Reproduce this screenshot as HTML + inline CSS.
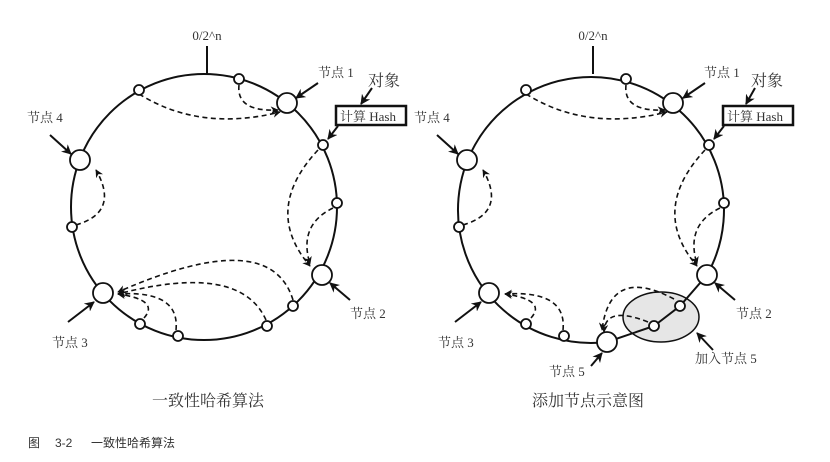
<!DOCTYPE html>
<html><head><meta charset="utf-8"><style>
html,body{margin:0;padding:0;background:#fff;width:830px;height:462px;overflow:hidden}
svg{display:block}
.t{font-family:"Liberation Serif","Noto Serif CJK SC",serif;fill:#333}
</style></head><body>
<svg width="830" height="462" viewBox="0 0 830 462" xmlns="http://www.w3.org/2000/svg">
<defs>
<marker id="ah" viewBox="0 0 10 10" refX="9" refY="5" markerWidth="5" markerHeight="5" orient="auto"><path d="M0,0 L10,5 L0,10 L3,5 z" fill="#111"/></marker>
</defs>
<g stroke="#111" fill="none">
<circle cx="204" cy="207" r="133" stroke-width="2"/>
<line x1="207" y1="46" x2="207" y2="74" stroke-width="2"/>
<g stroke-dasharray="5,3.5" stroke-width="1.6" marker-end="url(#ah)">
<path d="M139,94 Q200,132 280,112"/>
<path d="M239,85 Q236,112 278,110"/>
<path d="M318,150 Q262,210 310,266"/>
<path d="M333,208 Q298,225 310,264"/>
<path d="M76,225 Q120,212 96,170"/>
<path d="M293,300 Q270,225 118,292"/>
<path d="M266,320 Q240,262 118,294"/>
<path d="M176,330 Q180,290 118,294"/>
<path d="M144,318 Q160,300 118,294"/>
</g>
<g stroke-width="2" marker-end="url(#ah)">
<line x1="318" y1="83" x2="296" y2="98"/>
<line x1="372" y1="88" x2="361" y2="104"/>
<line x1="338" y1="126" x2="328" y2="139"/>
<line x1="50" y1="135" x2="71" y2="154"/>
<line x1="350" y1="300" x2="330" y2="283"/>
<line x1="68" y1="322" x2="94" y2="302"/>
</g>
<g fill="#fff" stroke-width="1.8">
<circle cx="139" cy="90" r="5"/><circle cx="239" cy="79" r="5"/><circle cx="323" cy="145" r="5"/>
<circle cx="337" cy="203" r="5"/><circle cx="293" cy="306" r="5"/><circle cx="267" cy="326" r="5"/>
<circle cx="178" cy="336" r="5"/><circle cx="140" cy="324" r="5"/><circle cx="72" cy="227" r="5"/>
<circle cx="287" cy="103" r="10"/><circle cx="322" cy="275" r="10"/><circle cx="103" cy="293" r="10"/><circle cx="80" cy="160" r="10"/>
</g>
<rect x="336" y="106" width="70" height="19" stroke-width="2.5" fill="#fff"/>

<ellipse cx="661" cy="317" rx="38" ry="25" fill="#e6e6e6" stroke-width="1.5"/>
<path d="M707,275 L680,306 L654,326 L607,342" stroke-width="2"/>
<path d="M607,342 A133,133 0 1 1 707,275" stroke-width="2"/>
<line x1="593" y1="46" x2="593" y2="74" stroke-width="2"/>
<g stroke-dasharray="5,3.5" stroke-width="1.6" marker-end="url(#ah)">
<path d="M526,94 Q587,132 667,112"/>
<path d="M626,85 Q623,112 665,110"/>
<path d="M705,150 Q649,210 697,266"/>
<path d="M720,208 Q685,225 697,264"/>
<path d="M463,225 Q507,212 483,170"/>
<path d="M563,330 Q567,290 505,294"/>
<path d="M531,318 Q547,300 505,294"/>
<path d="M674,299 Q610,265 602,330"/>
<path d="M648,322 Q605,305 604,332"/>
</g>
<g stroke-width="2" marker-end="url(#ah)">
<line x1="705" y1="83" x2="683" y2="98"/>
<line x1="755" y1="88" x2="746" y2="104"/>
<line x1="724" y1="126" x2="714" y2="139"/>
<line x1="437" y1="135" x2="458" y2="154"/>
<line x1="735" y1="300" x2="715" y2="283"/>
<line x1="455" y1="322" x2="481" y2="302"/>
<line x1="591" y1="366" x2="602" y2="353"/>
<line x1="713" y1="350" x2="697" y2="333"/>
</g>
<g fill="#fff" stroke-width="1.8">
<circle cx="526" cy="90" r="5"/><circle cx="626" cy="79" r="5"/><circle cx="709" cy="145" r="5"/>
<circle cx="724" cy="203" r="5"/><circle cx="680" cy="306" r="5"/><circle cx="654" cy="326" r="5"/>
<circle cx="564" cy="336" r="5"/><circle cx="526" cy="324" r="5"/><circle cx="459" cy="227" r="5"/>
<circle cx="673" cy="103" r="10"/><circle cx="707" cy="275" r="10"/><circle cx="489" cy="293" r="10"/><circle cx="467" cy="160" r="10"/><circle cx="607" cy="342" r="10"/>
</g>
<rect x="723" y="106" width="70" height="19" stroke-width="2.5" fill="#fff"/>
</g>

<g class="t" font-size="13">
<text x="207" y="40" text-anchor="middle">0/2^n</text>
<text x="318" y="77">节点 1</text>
<text x="368" y="86" font-size="16">对象</text>
<text x="340" y="121">计算 Hash</text>
<text x="27" y="122">节点 4</text>
<text x="350" y="318">节点 2</text>
<text x="52" y="347">节点 3</text>
<text x="208" y="406" font-size="16" text-anchor="middle">一致性哈希算法</text>

<text x="593" y="40" text-anchor="middle">0/2^n</text>
<text x="704" y="77">节点 1</text>
<text x="751" y="86" font-size="16">对象</text>
<text x="727" y="121">计算 Hash</text>
<text x="414" y="122">节点 4</text>
<text x="736" y="318">节点 2</text>
<text x="438" y="347">节点 3</text>
<text x="549" y="376">节点 5</text>
<text x="695" y="363">加入节点 5</text>
<text x="588" y="406" font-size="16" text-anchor="middle">添加节点示意图</text>
</g>
<g font-family="'Liberation Sans','Noto Sans CJK SC',sans-serif" font-size="12" fill="#333">
<text x="28" y="447">图</text>
<text x="55" y="447">3-2</text>
<text x="91" y="447">一致性哈希算法</text>
</g>
</svg>
</body></html>
